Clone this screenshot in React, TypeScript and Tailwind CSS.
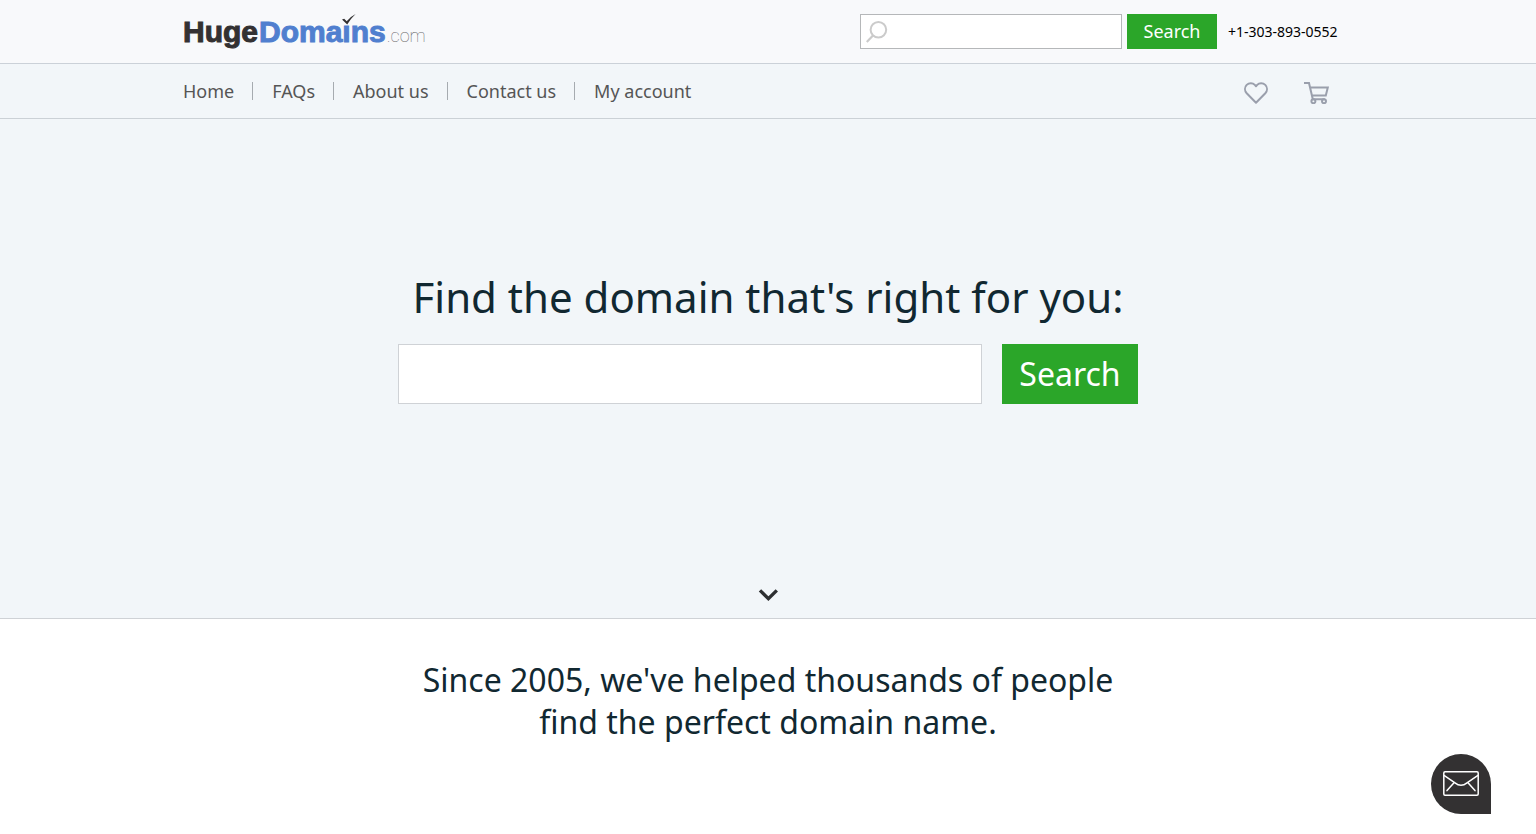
const navLinks = [
  { id: 1, title: "Home", path: "#home" },
  { id: 2, title: "FAQs", path: "#faqs" },
  { id: 3, title: "About us", path: "#about" },
  { id: 4, title: "Contact us", path: "#contact" },
  { id: 5, title: "My account", path: "#account" },
];

const Logo = () => (
  <a href="#home" aria-label="HugeDomains.com" className="flex items-baseline gap-px h-9 font-['Liberation_Sans',Arial,sans-serif] text-[30px] leading-9 font-bold whitespace-nowrap">
    <span className="text-[#333132] [-webkit-text-stroke:1px_#333132]">Huge</span>
    <span className="flex text-[#507fcf] [-webkit-text-stroke:1px_#507fcf]">
      Doma
      {/* the tick stands in for the dot of the i */}
      <span className="relative">
        ı
        <svg viewBox="0 0 14 11" className="absolute top-0 left-0 w-[14px] h-[11px]" fill="#333132">
          <path d="M0 5.6 2.2 4.8 4.7 7.2Q8.5 2.6 13.6 0 8.8 4.5 5.2 10.6Z" />
        </svg>
      </span>
      ns
    </span>
    <span className="font-['Roboto',sans-serif] text-lg leading-5 font-thin text-[#666]">.com</span>
  </a>
);

const TopBar = () => (
  <div className="bg-[#f8f9fb] border-b border-[#cbd1d8]">
    <div className="flex items-center justify-between max-w-[1170px] h-[63px] mx-auto pr-[11px]">
      <Logo />
      <form className="flex items-center" onSubmit={(e) => e.preventDefault()}>
        <div className="relative">
          <input type="text" aria-label="Search domains" className="block w-[262px] h-[35px] pl-8 pr-2 bg-white border border-[#b5b7b9] outline-none" />
          <svg viewBox="0 0 22 23" className="absolute top-[7px] left-[6px] w-[22px] h-[23px]" fill="none" stroke="#cbcbcb" strokeWidth="2">
            <circle cx="12.4" cy="8.8" r="7.8" />
            <path d="M7 14.6.8 21" strokeWidth="2.2" />
          </svg>
        </div>
        <button type="submit" className="w-[90px] h-[35px] ml-[5px] pb-px bg-[#2ba629] text-lg text-white">
          Search
        </button>
        <a href="tel:+13038930552" className="w-[125px] pl-[11px] text-sm whitespace-nowrap text-black">
          +1-303-893-0552
        </a>
      </form>
    </div>
  </div>
);

const NavBar = () => (
  <div className="bg-[#f2f6f9] border-b border-[#cbd1d6]">
    <div className="flex items-center justify-between max-w-[1170px] h-[54px] mx-auto pr-6">
      <nav className="flex items-center text-lg text-[#555]">
        {navLinks.map((item) => (
          <div key={item.id} className="group flex items-center">
            <a href={item.path}>{item.title}</a>
            <span className="w-px h-[18px] ml-[18px] mr-[19px] bg-[#a6abb0] group-last:hidden" />
          </div>
        ))}
      </nav>
      <div className="flex items-center gap-9 pt-1">
        {/* favorites */}
        <a href="#favorites" aria-label="Favorites">
          <svg viewBox="0 0 24 22" className="w-6 h-[22px]" fill="none" stroke="#9a9fac" strokeWidth="2" strokeLinejoin="round">
            <path d="M12 20.8 2.7 11.2C.5 8.8.4 5.2 2.7 2.9 5.1.6 8.7.6 10.8 2.9L12 4.2l1.2-1.3c2.1-2.3 5.7-2.3 8.1 0 2.3 2.3 2.2 5.9 0 8.3Z" />
          </svg>
        </a>
        {/* cart */}
        <a href="#cart" aria-label="Cart">
          <svg viewBox="0 0 25 22" className="w-[25px] h-[22px]" fill="none" stroke="#9a9fac" strokeWidth="2">
            <path d="M0 1h5l3.8 16.2M6 5.4h17.8l-2 8H8M7.8 17.2h13" />
            <circle cx="9.4" cy="19.2" r="2" />
            <circle cx="20" cy="19.2" r="2" />
          </svg>
        </a>
      </div>
    </div>
  </div>
);

const Hero = () => (
  <section className="flex flex-col items-center bg-[#f2f6f9] border-b border-[#cfd2d6] pt-[148px] pb-[17px]">
    <h1 className="text-[42px] leading-[60px] text-[#112831]">Find the domain that's right for you:</h1>
    <form className="flex gap-5 w-full max-w-[740px] mt-[17px]" onSubmit={(e) => e.preventDefault()}>
      <input type="text" aria-label="Domain name" className="flex-1 h-[60px] px-4 bg-white border border-[#cfd2d6] text-[32px] outline-none" />
      <button type="submit" className="w-[136px] h-[60px] bg-[#2ba629] text-[32px] text-white">
        Search
      </button>
    </form>
    <a href="#more" aria-label="Scroll down" className="mt-[185px]">
      <svg viewBox="0 0 20 12" className="w-5 h-3" fill="none" stroke="#2d2f31" strokeWidth="3.4">
        <path d="m2 1.4 8.4 8.2 8.4-8.2" />
      </svg>
    </a>
  </section>
);

const App = () => {
  return (
    <div className="min-h-screen bg-white font-['Noto_Sans',sans-serif]">
      <header>
        <TopBar />
        <NavBar />
      </header>
      <main>
        <Hero />
        <section id="more" className="pt-10 text-center">
          <h2 className="max-w-[740px] mx-auto text-[32px] leading-[42px] text-[#112831]">Since 2005, we've helped thousands of people find the perfect domain name.</h2>
        </section>
      </main>
      {/* contact bubble */}
      <button type="button" aria-label="Send us a message" className="fixed right-[45px] bottom-5 flex items-center justify-center w-[60px] h-[60px] pb-px rounded-full rounded-br-none bg-[#333132]">
        <svg viewBox="0 0 36 25" className="w-9 h-[25px]" fill="none" stroke="#fff" strokeWidth="1.5" strokeLinecap="round">
          <rect x=".8" y=".8" width="34.4" height="23.4" rx="1.2" />
          <path d="M1.4 4.6 12 11.8q6 4.8 12 0l10.6-7.2M10.8 12 4 19.6M25.2 12l6.8 7.6" />
        </svg>
      </button>
    </div>
  );
};

export default App;
